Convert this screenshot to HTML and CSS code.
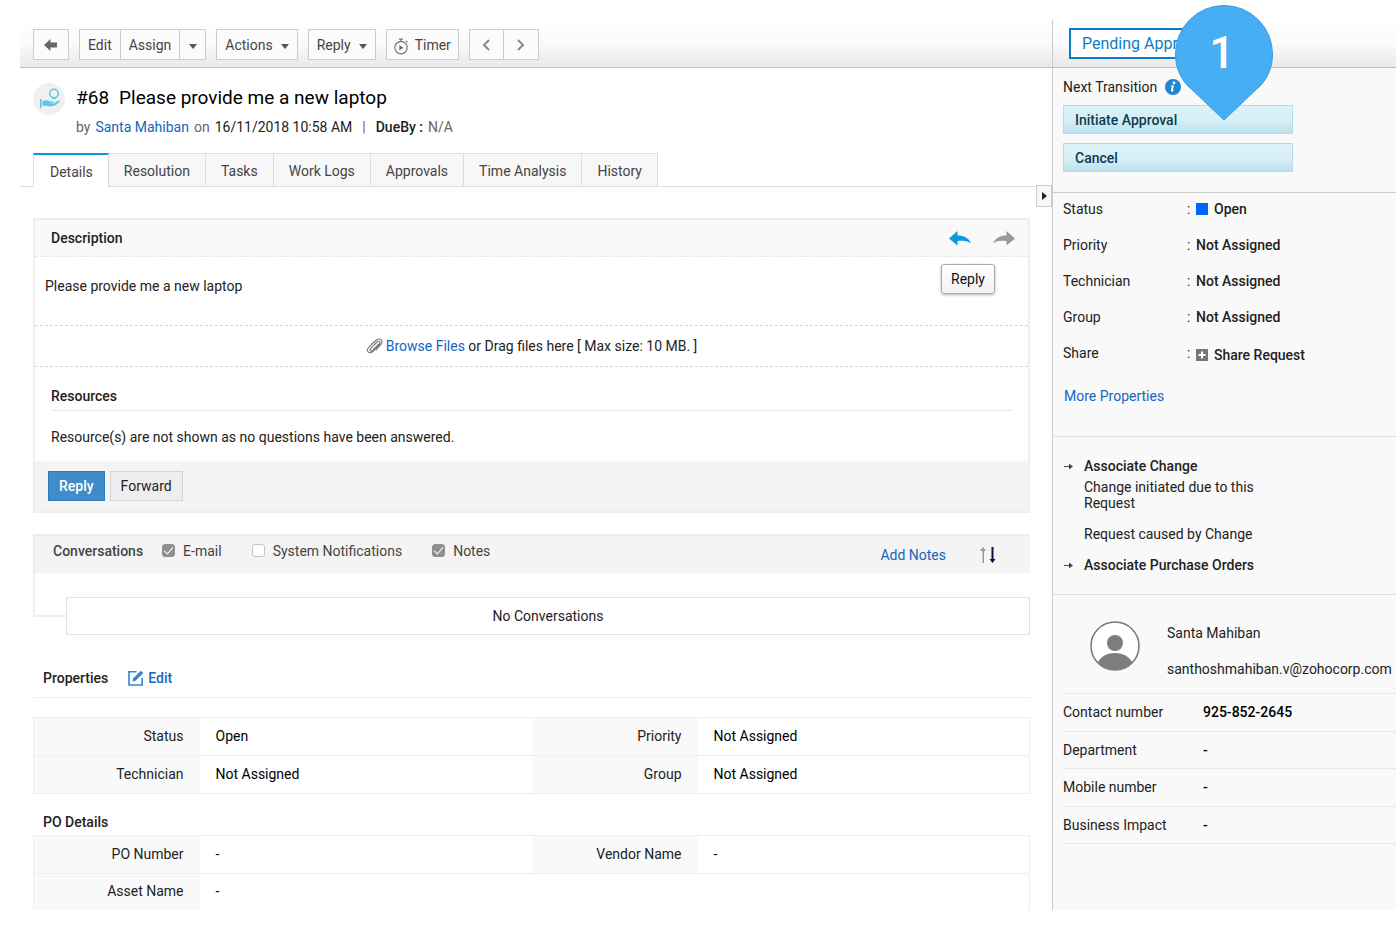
FILE: index.html
```html
<!DOCTYPE html>
<html lang="en">
<head>
<meta charset="utf-8">
<title>#68 Please provide me a new laptop</title>
<link rel="stylesheet" href="styles.css">
</head>
<body>
<div class="page">
  <header class="topbar">
    <div class="toolbar">
      <button class="btn back" type="button" aria-label="Back"><svg width="14" height="12" viewBox="0 0 14 12"><path d="M0 6 6.5 0v3.5H13v5H6.5V12z" fill="#666"/></svg></button>
      <div class="btn-group">
        <button class="btn" type="button">Edit</button>
        <button class="btn" type="button">Assign</button>
        <button class="btn drop" type="button" aria-label="More assign options"><span class="caret"></span></button>
      </div>
      <button class="btn actions" type="button">Actions <span class="caret"></span></button>
      <button class="btn actions" type="button">Reply <span class="caret"></span></button>
      <button class="btn timer" type="button"><svg width="15" height="17" viewBox="0 0 15 17" fill="none" stroke="#777" stroke-width="1.2"><circle cx="7" cy="9.6" r="6.2"/><path d="M5 1.2h4M7 1.2v2M12 3l1.6 1.4"/><path d="M5.4 7.2v5l4-2.5z" fill="#2e8b35" stroke="none"/></svg>Timer</button>
      <div class="btn-group nav">
        <button class="btn" type="button" aria-label="Previous"><svg width="8" height="12" viewBox="0 0 8 12" fill="none" stroke="#888" stroke-width="2"><path d="M7 1 2 6l5 5"/></svg></button>
        <button class="btn" type="button" aria-label="Next"><svg width="8" height="12" viewBox="0 0 8 12" fill="none" stroke="#888" stroke-width="2"><path d="m1 1 5 5-5 5"/></svg></button>
      </div>
    </div>
    <div class="stage"><button class="stage-btn" type="button">Pending Approval</button></div>
  </header>

  <div class="columns">
    <main class="main">
      <div class="request-head">
        <svg class="req-icon" width="32" height="32" viewBox="0 0 32 32"><circle cx="16" cy="16" r="16" fill="#f0f0f0"/><g fill="#5cc5ea"><path d="M7 16h1.6v8.200L7 25.500z"/><path d="M9.500 18.200c3-1.500 5-1.200 7.500.4h3c1.300 0 1.200 1.600 0 1.700h-3.500c2 .8 4.200.3 5.500-.6l3.300-2c1.200-.6 2 .2 1 1.200-2 2-4.500 4-7 4.300-3.300.3-6-.9-9.800-.4z"/></g><circle cx="21" cy="10.500" r="4.300" fill="none" stroke="#5cc5ea" stroke-width="1.500"/><path d="M19 15.600h4" stroke="#5cc5ea"/></svg>
        <div>
          <h1 class="title"><span>#68</span><span>Please provide me a new laptop</span></h1>
          <p class="byline"><span>by</span><a href="#">Santa Mahiban</a><span>on</span><span class="dark">16/11/2018 10:58 AM</span><span class="bar">|</span><b>DueBy :</b><span>N/A</span></p>
        </div>
      </div>

      <nav class="tabs">
        <a class="tab active" href="#">Details</a>
        <a class="tab" href="#">Resolution</a>
        <a class="tab" href="#">Tasks</a>
        <a class="tab" href="#">Work Logs</a>
        <a class="tab" href="#">Approvals</a>
        <a class="tab" href="#">Time Analysis</a>
        <a class="tab" href="#">History</a>
      </nav>
      <button class="collapse" type="button" aria-label="Collapse side panel"><svg width="5" height="8" viewBox="0 0 5 8"><path d="M0 0l5 4-5 4z" fill="#222"/></svg></button>

      <div class="content">
        <section class="panel">
          <div class="panel-head">
            <h2>Description</h2>
            <div class="mail-actions">
              <button class="icon-btn" type="button" aria-label="Reply"><svg width="22" height="15" viewBox="0 0 22 15"><path d="M0 7.500 8.500 0v4.500C15 4.500 19.500 7 22 12.300 18 9.700 14 9.300 8.500 10v4.500z" fill="#0c98de"/></svg></button>
              <button class="icon-btn" type="button" aria-label="Forward"><svg width="22" height="15" viewBox="0 0 22 15"><path d="M22 7.500 13.500 0v4.500C7 4.500 2.500 7 0 12.300 4 9.700 8 9.300 13.500 10v4.500z" fill="#999"/></svg></button>
              <span class="tooltip" role="tooltip">Reply</span>
            </div>
          </div>
          <p class="desc">Please provide me a new laptop</p>
          <div class="files">
            <svg width="17" height="17" viewBox="0 0 17 17" fill="none" stroke="#777" stroke-width="1.100" stroke-linecap="round"><path d="M12.800 6 6.600 12.300c-1.700 1.500-3.400-.2-2-1.800L11 4c1.900-1.800 4.100.3 2.400 2.300L6.800 13.500C4 16.300.300 13.600 1.700 10.800 3 9 8 4 10.500 2c3.500-2.500 7 .8 4.600 4.200L10 11.800"/></svg>
            <span><a href="#">Browse Files</a> or Drag files here [ Max size: 10 MB. ]</span>
          </div>
          <div class="resources">
            <h2>Resources</h2>
            <p>Resource(s) are not shown as no questions have been answered.</p>
          </div>
          <div class="panel-foot">
            <button class="btn primary" type="button">Reply</button>
            <button class="btn plain" type="button">Forward</button>
          </div>
        </section>

        <section class="conversations">
          <div class="conv-head">
            <div class="filters">
              <h2>Conversations</h2>
              <label><input type="checkbox" checked>E-mail</label>
              <label><input type="checkbox">System Notifications</label>
              <label><input type="checkbox" checked>Notes</label>
            </div>
            <a class="add-notes" href="#">Add Notes</a>
            <button class="icon-btn sort" type="button" aria-label="Sort order"><svg width="16" height="16" viewBox="0 0 16 16"><path d="M3 0l3 4H4v12H2.500V4H0z" fill="#999"/><path d="M12.500 16l-3-4h2V0h2v12h2z" fill="#120a4a"/></svg></button>
          </div>
          <div class="thread">
            <div class="branch"></div>
            <div class="empty">No Conversations</div>
          </div>
        </section>

        <div class="prop-head">
          <h2>Properties</h2>
          <a href="#"><svg width="16" height="16" viewBox="0 0 16 16" fill="none" stroke="#3186cf" stroke-width="1.600"><path d="M8.500 1.800H1v13.200h13.200V8"/><path d="M4.500 11.500l.7-3.200L12.800.700l2.500 2.300-7.700 7.800z" fill="#3186cf" stroke="none"/></svg>Edit</a>
        </div>
        <table class="props">
          <tr><th>Status</th><td>Open</td><th>Priority</th><td>Not Assigned</td></tr>
          <tr><th>Technician</th><td>Not Assigned</td><th>Group</th><td>Not Assigned</td></tr>
        </table>
        <h2 class="po-title">PO Details</h2>
        <table class="props open">
          <tr><th>PO Number</th><td>-</td><th>Vendor Name</th><td>-</td></tr>
          <tr><th>Asset Name</th><td>-</td><td></td><td></td></tr>
        </table>
      </div>
    </main>

    <aside class="side">
      <section class="transition">
        <p class="next">Next Transition <svg width="16" height="16" viewBox="0 0 16 16"><circle cx="8" cy="8" r="8" fill="#1d87d0"/><circle cx="9" cy="4" r="1.400" fill="#fff"/><path d="M6 6.500h3l-1.300 5 1.200-.5-.3 1c-1 .8-3 1.200-2.700-.4l1-4.200-1.200.1z" fill="#fff"/></svg></p>
        <button class="trans-btn" type="button">Initiate Approval</button>
        <button class="trans-btn" type="button">Cancel</button>
      </section>
      <section class="summary">
        <dl>
          <div><dt>Status</dt><dd><i>:</i><span class="swatch"></span>Open</dd></div>
          <div><dt>Priority</dt><dd><i>:</i>Not Assigned</dd></div>
          <div><dt>Technician</dt><dd><i>:</i>Not Assigned</dd></div>
          <div><dt>Group</dt><dd><i>:</i>Not Assigned</dd></div>
          <div><dt>Share</dt><dd><i>:</i><span class="share"><svg width="12" height="12" viewBox="0 0 12 12"><path d="M0 0h12v12H0z" fill="#777"/><path d="M6 2.500v7M2.500 6h7" stroke="#fff" stroke-width="2"/></svg>Share Request</span></dd></div>
        </dl>
        <a class="more" href="#">More Properties</a>
      </section>
      <section class="assoc">
        <svg width="9" height="7" viewBox="0 0 9 7"><path d="M0 3h5V.500l4 3-4 3V4H0z" fill="#444"/></svg>
        <h3>Associate Change</h3>
        <p>Change initiated due to this Request</p>
        <p class="gap">Request caused by Change</p>
        <svg width="9" height="7" viewBox="0 0 9 7"><path d="M0 3h5V.500l4 3-4 3V4H0z" fill="#444"/></svg>
        <h3>Associate Purchase Orders</h3>
      </section>
      <section class="contact">
        <div class="person">
          <svg width="50" height="50" viewBox="0 0 50 50"><defs><clipPath id="face"><circle cx="25" cy="25" r="24"/></clipPath></defs><circle cx="25" cy="25" r="24" fill="#fff" stroke="#777" stroke-width="1.500"/><circle cx="25" cy="22" r="8" fill="#7d7d7d"/><ellipse cx="25" cy="46" rx="18" ry="14" fill="#7d7d7d" clip-path="url(#face)"/></svg>
          <div><p>Santa Mahiban</p><p>santhoshmahiban.v@zohocorp.com</p></div>
        </div>
        <dl class="rows">
          <div><dt>Contact number</dt><dd>925-852-2645</dd></div>
          <div><dt>Department</dt><dd>-</dd></div>
          <div><dt>Mobile number</dt><dd>-</dd></div>
          <div><dt>Business Impact</dt><dd>-</dd></div>
        </dl>
      </section>
    </aside>
  </div>

  <div class="pin">
    <svg width="98" height="116" viewBox="0 0 98 116"><path d="M49 115 12 80C5 72 .500 62 .500 49a48.500 48.500 0 0 1 97 0c0 13-4.500 23-11.500 31z" fill="#46aef2" stroke="#3b9be0"/></svg>
    <span>1</span>
  </div>
</div>
</body>
</html>
```
FILE: styles.css
```css
* { box-sizing: border-box; }
body { margin: 0; background: #fff; color: #222; font: 14px/16px Roboto, "Liberation Sans", sans-serif; }
h1, h2, h3, p, dl, dd { margin: 0; }
h2, h3 { font-size: 14px; font-weight: 500; }
a { color: #1565c0; text-decoration: none; }
button { font: inherit; color: inherit; cursor: pointer; }
svg { flex: none; display: block; }

.page { position: relative; padding: 20px 0 19px 20px; }

/* Top bar */
.topbar { display: grid; grid-template-columns: 1fr 344px; height: 48px; border-bottom: 1px solid #bfbfbf; background: linear-gradient(#fff, #fafafa 50%, #e9e9e9); }
.toolbar { display: flex; align-items: center; padding: 2px 13px 0; gap: 10px; }
.btn { display: flex; align-items: center; justify-content: center; height: 31px; padding: 0 8px; border: 1px solid #ccc; background: #fbfbfb; color: #444; white-space: nowrap; }
.btn-group { display: flex; }
.btn-group .btn + .btn { border-left: 0; }
.back { width: 36px; }
.drop { width: 26px; }
.caret { border: 4px solid transparent; border-top: 5px solid #555; border-bottom: 0; margin-top: 3px; }
.actions { gap: 8px; padding: 0 8px; }
.timer { gap: 6px; padding: 0 7px; }
.timer svg { margin-top: 3px; }
.nav .btn { width: 35px; }
.stage { display: flex; align-items: center; padding-left: 16px; border-left: 1px solid #ccc; }
.stage-btn { height: 31px; padding: 0 11px; border: 2px solid #0c7cc4; background: #fff; color: #0c7cc4; font-size: 16px; white-space: nowrap; }

/* Columns */
.columns { display: grid; grid-template-columns: minmax(0, 1fr) 344px; }
.main { position: relative; }
.request-head { display: flex; gap: 11px; padding: 15px 13px 0; }
.title { display: flex; gap: 10px; color: #000; font-size: 19px; line-height: 24px; font-weight: 400; padding-top: 3px; }
.byline { display: flex; gap: 5px; margin-top: 9px; color: #666; }
.byline .dark, .byline b { color: #222; }
.byline b { font-weight: 500; }
.bar { padding: 0 5px; }
.tabs { display: flex; margin-top: 18px; padding-left: 13px; height: 34px; border-bottom: 1px solid #ddd; }
.tab { padding: 9px 15px 0; color: #444; background: #f7f7f7; border: solid #ddd; border-width: 1px 1px 0 0; white-space: nowrap; }
.tab.active { margin-bottom: -1px; padding-left: 16px; background: #fff; border-top: 2px solid #0c98de; border-left-width: 1px; }
.collapse { position: absolute; top: 117px; right: 0; width: 16px; height: 22px; display: flex; align-items: center; justify-content: center; padding: 0; border: 1px solid #ccc; background: #f7f7f7; }
.content { padding: 31px 22px 0 13px; }

/* Description */
.panel { border: 2px solid #eee; }
.panel-head { display: flex; align-items: center; justify-content: space-between; height: 37px; padding: 0 13px 0 16px; background: #f9f9f9; border-bottom: 1px dashed #e6e6e6; }
.mail-actions { position: relative; display: flex; gap: 22px; }
.icon-btn { padding: 0; border: 0; background: none; }
.tooltip { position: absolute; top: 33px; left: -8px; padding: 6px 9px; border: 1px solid #aaa; border-radius: 3px; background: linear-gradient(#fff, #f1f1f5); box-shadow: 0 1px 3px rgba(0, 0, 0, .3); color: #111; }
.desc { height: 68px; padding: 21px 10px 0; }
.files { display: flex; align-items: center; justify-content: center; gap: 3px; height: 42px; border: dashed #d4d4d4; border-width: 1px 0; }
.resources { padding: 21px 16px 0; }
.resources h2 { padding-bottom: 6px; border-bottom: 1px solid #e8e8e8; }
.resources p { padding: 18px 0 16px; }
.panel-foot { display: flex; gap: 5px; padding: 10px 13px; background: #f4f4f4; }
.panel-foot .btn { height: 30px; padding: 0 10px; }
.panel-foot .primary { background: #3f8ccb; border-color: #2c7cc0; color: #fff; font-weight: 500; }
.panel-foot .plain { background: #eee; border-color: #d4d4d4; color: #222; }

/* Conversations */
.conversations { margin-top: 21px; }
.conv-head { display: flex; align-items: center; height: 39px; padding: 0 34px 0 18px; border: solid #eee; border-width: 2px 0 0 2px; background: #f4f4f4; }
.filters { display: flex; flex: 1; align-items: center; padding-bottom: 8px; color: #444; }
.filters h2 { margin-right: 19px; }
.filters label { display: flex; align-items: center; gap: 8px; margin-right: 30px; }
.filters input { appearance: none; width: 13px; height: 13px; margin: 0; border: 1px solid #c4c4c4; border-radius: 3px; background: #fff; display: grid; place-items: center; }
.filters input:checked { background: #8f8f93; border-color: #8f8f93; }
.filters input:checked::after { content: ""; width: 4px; height: 8px; margin-bottom: 2px; border: solid #fff; border-width: 0 1px 1px 0; rotate: 40deg; }
.add-notes { margin-right: 34px; }
.thread { display: flex; }
.branch { width: 33px; height: 44px; border: solid #eee; border-width: 0 0 2px 2px; }
.empty { flex: 1; margin-top: 24px; padding: 10px; border: 1px solid #e4e4e4; text-align: center; }

/* Property tables */
.prop-head { display: flex; gap: 20px; margin-top: 35px; padding: 0 10px 11px; border-bottom: 1px solid #eee; }
.prop-head a { display: flex; gap: 4px; font-weight: 500; }
.props { width: 100%; margin-top: 19px; table-layout: fixed; border-collapse: collapse; border: 1px solid #eee; }
.props tr { height: 38px; border-bottom: 1px solid #eee; }
.props th, .props td { padding: 0 16px 1px; }
.props th { width: 166px; background: #f9f9f9; font-weight: 400; text-align: right; }
.props td { color: #000; }
.po-title { margin-top: 20px; padding: 0 10px; }
.props.open { margin-top: 5px; border-bottom: 0; }
.props.open tr:last-child { height: 36px; border-bottom: 0; }

/* Side panel */
.side { background: #f9f9f9; border-left: 1px solid #ccc; }
.transition { padding: 11px 10px 20px; border-bottom: 1px solid #ccc; }
.next { display: flex; align-items: center; gap: 8px; margin-bottom: 10px; }
.trans-btn { display: block; width: 230px; height: 29px; padding: 0 11px; border: 1px solid #b5dce8; background: linear-gradient(#dcf1f8, #d8eff7 50%, #bce2ed); color: #0c3c50; font-weight: 500; text-align: left; }
.trans-btn + .trans-btn { margin-top: 9px; }
.summary { padding: 8px 10px 32px; border-bottom: 1px solid #ddd; }
.summary dl { display: grid; gap: 20px; }
.summary dl div { display: flex; }
.summary dt { width: 124px; }
.summary dd { display: flex; align-items: center; font-weight: 500; }
.summary i { width: 9px; font-style: normal; font-weight: 400; }
.swatch { width: 12px; height: 12px; margin-right: 6px; background: #0066ff; }
.summary dd:has(.share) { align-items: flex-start; }
.share { display: flex; align-items: center; gap: 6px; padding-top: 2px; }
.more { display: block; margin-top: 25px; padding-left: 1px; }
.assoc { display: grid; grid-template-columns: 20px 180px; justify-content: start; padding: 21px 11px 16px; border-bottom: 1px solid #ddd; }
.assoc svg { margin-top: 5px; }
.assoc h3 { white-space: nowrap; margin-bottom: 5px; }
.assoc p { grid-column: 2; }
.assoc .gap { margin: 15px 0; }
.contact { padding: 26px 0 63px 10px; }
.person { display: flex; gap: 27px; padding: 0 0 16px 27px; }
.person p { margin-top: 4px; }
.person p + p { margin-top: 20px; }
.rows { display: flex; flex-direction: column; height: 151px; border-top: 1px solid #e8e8e8; }
.rows div { display: flex; flex: 1; align-items: center; border-bottom: 1px solid #e8e8e8; }
.rows dt { width: 140px; }
.rows dd { color: #000; font-weight: 500; }

/* Step marker */
.pin { position: absolute; top: 5px; right: 123px; }
.pin span { position: absolute; top: 24px; left: 0; width: 94px; color: #fff; font-size: 44px; line-height: 48px; font-weight: 500; text-align: center; text-shadow: 0 1px 1px #8ab; }
```
